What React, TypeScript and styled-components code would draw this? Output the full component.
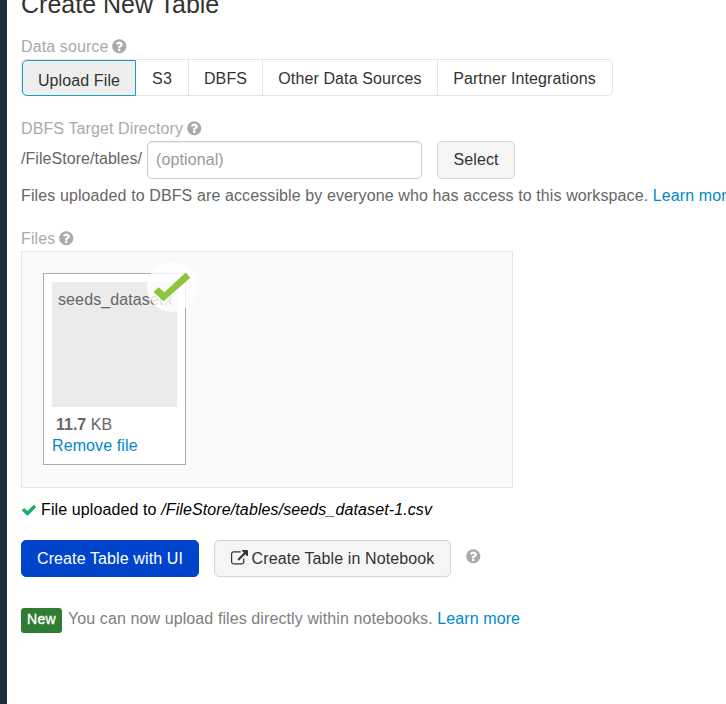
import React from "react";
import styled, { createGlobalStyle, css } from "styled-components";

const GlobalStyle = createGlobalStyle`
  * { box-sizing: border-box; }
  html, body { margin: 0; background: #fff; overflow: hidden; }
  body {
    font: 16px/20px "Liberation Sans", Arial, sans-serif;
    letter-spacing: 0.11px;
    color: #666;
  }
`;

const Page = styled.div`
  display: flex;
  width: 726px;
  height: 704px;
  overflow: hidden;
`;

const NavEdge = styled.aside`
  flex: 0 0 7px;
  background: #1b3139;
`;

const Main = styled.main`
  flex: 1;
  min-width: 0;
  padding-left: 14px;
  white-space: nowrap;
`;

const Title = styled.h1`
  margin: -11px 0 0;
  height: 48px;
  font-size: 25px;
  line-height: 31px;
  font-weight: 400;
  letter-spacing: 0;
  color: #333;
`;

const Label = styled.div`
  display: flex;
  align-items: center;
  gap: 3px;
  height: 20px;
  margin-bottom: 2px;
  color: #aaa;
`;

const Icon = styled.svg<{ $size: number }>`
  flex: none;
  display: block;
  width: ${(p) => p.$size}px;
  height: ${(p) => p.$size}px;
  margin-top: -1px;
  fill: currentColor;
`;

const Tabs = styled.div`
  display: flex;
  width: 592px;
  height: 37px;
  margin-bottom: 23px;
  border: 1px solid #e5e5e5;
  border-radius: 5px;
`;

const Tab = styled.button<{ $width: number; $active?: boolean }>`
  width: ${(p) => p.$width}px;
  padding: 3px 0 0;
  border: 0;
  border-right: 1px solid #e5e5e5;
  background: transparent;
  font: inherit;
  letter-spacing: inherit;
  color: #333;
  &:last-child { border-right: 0; padding-right: 1px; }
  ${(p) =>
    p.$active &&
    css`
      height: 36px;
      padding-top: 5px;
      border: 1px solid #1b9dc0;
      border-radius: 5px 0 0 5px;
      background: #eee;
    `}
`;

const DirectoryRow = styled.div`
  display: flex;
  height: 38px;
  margin-bottom: 7px;
`;

const Prefix = styled.span`
  width: 126px;
  padding-top: 8px;
  letter-spacing: 0.05px;
`;

const PathInput = styled.input`
  width: 275px;
  height: 38px;
  margin-right: 15px;
  padding: 0 8px 1px;
  border: 1px solid #ccc;
  border-radius: 5px;
  box-shadow: inset 0 1px 1px rgba(0, 0, 0, 0.075);
  font: inherit;
  letter-spacing: inherit;
  &::placeholder { color: #999; opacity: 1; }
`;

const Button = styled.button<{ $width: number; $primary?: boolean }>`
  display: flex;
  align-items: center;
  justify-content: center;
  gap: 4px;
  width: ${(p) => p.$width}px;
  padding: 0;
  border: 1px solid ${(p) => (p.$primary ? "#0044cc" : "#d5d5d5")};
  border-radius: 5px;
  background: ${(p) => (p.$primary ? "#0044cc" : "#f5f5f5")};
  color: ${(p) => (p.$primary ? "#fff" : "#333")};
  font: inherit;
  letter-spacing: inherit;
`;

const Note = styled.p`
  margin: 0 0 23px;
`;

const Link = styled.a`
  color: #0088cc;
  text-decoration: none;
`;

const DropZone = styled.section`
  width: 492px;
  height: 237px;
  padding: 21px;
  border: 1px solid #e5e5e5;
  background: #fafafa;
`;

const FileCard = styled.article`
  position: relative;
  width: 143px;
  height: 192px;
  padding: 8px;
  border: 1px solid #acacac;
  background: #fff;
`;

const Thumbnail = styled.div`
  width: 125px;
  height: 125px;
  margin-bottom: 8px;
  padding: 8px 5px 8px 6px;
  background: #ebebeb;
`;

const FileName = styled.div`
  overflow: hidden;
`;

const FileSize = styled.div`
  height: 21px;
  padding-left: 4px;
  letter-spacing: 0;
`;

const SuccessMark = styled.div`
  position: absolute;
  top: -12px;
  right: -12px;
  width: 50px;
  height: 50px;
  border-radius: 50%;
  background: rgba(255, 255, 255, 0.8);
`;

const MarkDrawing = styled.svg`
  display: block;
  width: 50px;
  height: 50px;
`;

const Status = styled.div`
  display: flex;
  align-items: center;
  gap: 5px;
  margin: 12px 0 20px;
  color: #000;
`;

const GreenIcon = styled.span`
  margin-right: -1px;
  color: #1cb067;
`;

const Actions = styled.div`
  display: flex;
  height: 37px;
  gap: 15px;
  margin-bottom: 31px;
`;

const Help = styled.span`
  margin-left: -1px;
  padding-top: 9px;
  color: #aaa;
`;

const NewsRow = styled.div`
  display: flex;
  gap: 6px;
  color: #808080;
`;

const Badge = styled.span`
  width: 41px;
  height: 25px;
  border-radius: 3px;
  background: #2e7d32;
  color: #fff;
  font-size: 14px;
  line-height: 23px;
  letter-spacing: 0.3px;
  text-align: center;
  -webkit-text-stroke: 0.35px #fff;
`;

const NewsText = styled.span`
  padding-top: 1px;
  letter-spacing: 0.1px;
`;

const paths = {
  question:
    "M1024 1376v-192q0-14-9-23t-23-9h-192q-14 0-23 9t-9 23v192q0 14 9 23t23 9h192q14 0 23-9t9-23zm256-672q0-88-55.500-163t-138.500-116-170-41q-243 0-371 213-15 24 8 42l132 100q7 6 19 6 16 0 25-12 53-68 86-92 34-24 86-24 48 0 85.500 26t37.500 59q0 38-20 61t-68 45q-63 28-115.500 86.500t-52.500 125.500v36q0 14 9 23t23 9h192q14 0 23-9t9-23q0-19 21.500-49.500t54.500-49.500q32-18 49-28.500t46-35 44.500-48 28-60.500 12.500-81zm384 192q0 209-103 385.500t-279.500 279.500-385.500 103-385.500-103-279.500-279.500-103-385.500 103-385.500 279.500-279.500 385.500-103 385.500 103 279.500 279.500 103 385.500z",
  check:
    "M1671 566q0 40-28 68l-724 724-136 136q-28 28-68 28t-68-28l-136-136-362-362q-28-28-28-68t28-68l136-136q28-28 68-28t68 28l294 295 656-657q28-28 68-28t68 28l136 136q28 28 28 68z",
  external:
    "M1408 928v320q0 119-84.500 203.500t-203.500 84.500h-832q-119 0-203.500-84.500t-84.500-203.500v-832q0-119 84.500-203.500t203.500-84.500h704q14 0 23 9t9 23v64q0 14-9 23t-23 9h-704q-66 0-113 47t-47 113v832q0 66 47 113t113 47h832q66 0 113-47t47-113v-320q0-14 9-23t23-9h64q14 0 23 9t9 23zM1792 64v512q0 26-19 45t-45 19-45-19l-176-176-652 652q-10 10-23 10t-23-10l-114-114q-10-10-10-23t10-23l652-652-176-176q-19-19-19-45t19-45 45-19h512q26 0 45 19t19 45z",
};

const Glyph = ({ name, size = 16.5 }: { name: keyof typeof paths; size?: number }) => (
  <Icon viewBox="0 0 1792 1792" $size={size} aria-hidden="true">
    <path d={paths[name]} />
  </Icon>
);

const tabs = [
  { label: "Upload File", width: 114, active: true },
  { label: "S3", width: 53 },
  { label: "DBFS", width: 74 },
  { label: "Other Data Sources", width: 175 },
  { label: "Partner Integrations", width: 174 },
];

export default function App() {
  return (
    <Page>
      <GlobalStyle />
      <NavEdge />
      <Main>
        <Title>Create New Table</Title>
        <Label>
          Data source <Glyph name="question" />
        </Label>
        <Tabs>
          {tabs.map((t) => (
            <Tab key={t.label} $width={t.width} $active={t.active}>
              {t.label}
            </Tab>
          ))}
        </Tabs>
        <Label>
          DBFS Target Directory <Glyph name="question" />
        </Label>
        <DirectoryRow>
          <Prefix>/FileStore/tables/</Prefix>
          <PathInput placeholder="(optional)" />
          <Button $width={78}>Select</Button>
        </DirectoryRow>
        <Note>
          Files uploaded to DBFS are accessible by everyone who has access to this workspace.{" "}
          <Link>Learn more</Link>
        </Note>
        <Label>
          Files <Glyph name="question" />
        </Label>
        <DropZone>
          <FileCard>
            <Thumbnail>
              <FileName>seeds_dataset.csv</FileName>
            </Thumbnail>
            <FileSize>
              <strong>11.7</strong> KB
            </FileSize>
            <Link>Remove file</Link>
            <SuccessMark>
              <MarkDrawing viewBox="0 0 50 50">
                <path d="M6.500 30 L11.500 25.300 L17.500 30.300 L38.700 10.500 L43.300 15.700 L16.500 39.300 Z" fill="#8cc63f" />
              </MarkDrawing>
            </SuccessMark>
          </FileCard>
        </DropZone>
        <Status>
          <GreenIcon>
            <Glyph name="check" size={16} />
          </GreenIcon>
          <span>
            File uploaded to <em>/FileStore/tables/seeds_dataset-1.csv</em>
          </span>
        </Status>
        <Actions>
          <Button $width={178} $primary>
            Create Table with UI
          </Button>
          <Button $width={237}>
            <Glyph name="external" size={17} />
            Create Table in Notebook
          </Button>
          <Help>
            <Glyph name="question" />
          </Help>
        </Actions>
        <NewsRow>
          <Badge>New</Badge>
          <NewsText>
            You can now upload files directly within notebooks. <Link>Learn more</Link>
          </NewsText>
        </NewsRow>
      </Main>
    </Page>
  );
}
